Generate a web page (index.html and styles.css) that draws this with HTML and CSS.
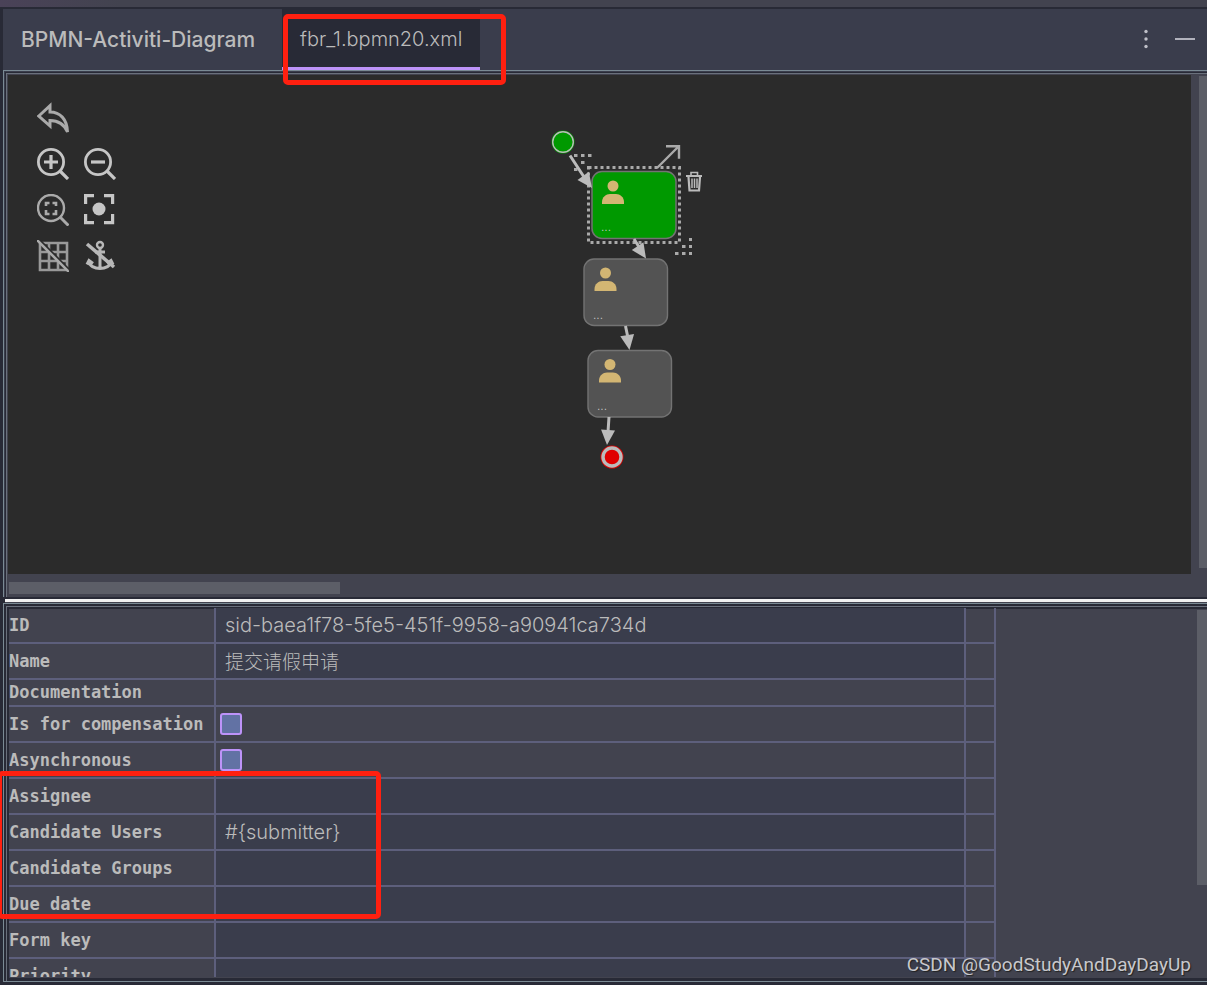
FILE: index.html
```html
<!DOCTYPE html>
<html lang="en">
<head>
<meta charset="utf-8">
<title>BPMN-Activiti-Diagram</title>
<link rel="stylesheet" href="styles.css">
</head>
<body>
<div class="strip"></div>
<main class="window">
  <header class="header">
    <h1 class="title">BPMN-Activiti-Diagram</h1>
    <button class="tab" type="button">fbr_1.bpmn20.xml</button>
    <div class="actions">
      <button class="action" type="button" aria-label="Options"><svg width="20" height="22" viewBox="0 0 20 22" fill="#bfc0c8"><circle cx="10" cy="3.5" r="1.7"/><circle cx="10" cy="11" r="1.7"/><circle cx="10" cy="18.5" r="1.7"/></svg></button>
      <button class="action" type="button" aria-label="Hide"><svg width="20" height="22" viewBox="0 0 20 22"><path d="M0 11h20" stroke="#b1b2bc" stroke-width="2"/></svg></button>
    </div>
  </header>

  <section class="pane diagram">
    <div class="canvas">
      <svg class="graph" role="img" aria-label="Process diagram">
        <defs>
          <g id="user"><circle cx="22" cy="14" r="5.5"/><path d="M11 32v-2c0-5 4-8 8-8h6c4 0 8 3 8 8v2z"/></g>
          <path id="head" d="M0 0L-15 7V-7z"/>
        </defs>
        <g transform="translate(-8 -75)">
          <circle cx="563" cy="142" r="11.5" fill="#009900"/>
          <circle cx="563" cy="142" r="10.3" fill="none" stroke="#bbb" stroke-width="1.4"/>
          <path d="M574 155.500h3.500M581 155.500h3.500M588 155.500h3.500M581 162.500h3.500M574 169.500h3.500" stroke="#aaa" stroke-width="3"/>
          <rect x="592" y="171.500" width="84" height="67" rx="10" fill="#009900" stroke="#737373" stroke-width="1.500"/>
          <rect x="588.500" y="167.500" width="91" height="75" fill="none" stroke="#aaa" stroke-width="3" stroke-dasharray="3 3"/>
          <use href="#user" x="591" y="172" fill="#d3b673"/>
          <text class="dots" x="601" y="231">...</text>
          <rect x="584" y="259" width="83.500" height="66.500" rx="10" fill="#535353" stroke="#737373" stroke-width="1.400"/>
          <use href="#user" x="583.500" y="259" fill="#d3b673"/>
          <text class="dots" x="593" y="319">...</text>
          <rect x="588" y="350.500" width="83.500" height="66.500" rx="10" fill="#535353" stroke="#737373" stroke-width="1.400"/>
          <use href="#user" x="588" y="350.500" fill="#d3b673"/>
          <text class="dots" x="597" y="410">...</text>
          <g fill="#bbb" stroke="none">
            <path d="M570 155.500L584 177M634 239L639 247M625.500 326L628 338M609 417L608 432" stroke="#bbb" stroke-width="3"/>
            <use href="#head" transform="translate(592 188) rotate(54)"/>
            <use href="#head" transform="translate(646 258.500) rotate(56)"/>
            <use href="#head" transform="translate(629.500 350) rotate(81)"/>
            <use href="#head" transform="translate(607 445) rotate(94)"/>
          </g>
          <circle cx="612" cy="457" r="11.500" fill="#e00000"/>
          <circle cx="612" cy="457" r="9" fill="#e00000" stroke="#bbb" stroke-width="3.400"/>
          <path d="M657 168L678.500 146.500M666 146.200h13v12.500" fill="none" stroke="#aaa" stroke-width="2.400"/>
          <g fill="none" stroke="#bbb">
            <path d="M686 176h16" stroke-width="2"/>
            <path d="M691 175v-2.500h6.500v2.500" stroke-width="1.600"/>
            <path d="M688.500 177l1 13.500h9.500l1-13.500" stroke-width="2.200"/>
            <path d="M692 178.500v9.500M694.500 178.500v9.500M697 178.500v9.500" stroke-width="1.500"/>
          </g>
          <path d="M689 239.500h3M682 246.500h3.500M689 246.500h3M675 253.500h3.500M682 253.500h3.500M689 253.500h3" stroke="#aaa" stroke-width="3"/>
        </g>
      </svg>
      <div class="tools">
        <button class="tool undo" type="button" aria-label="Undo"><svg viewBox="0 0 32 32"><path d="M1.800 14L13 3.700V10C23 10 30 17 30.500 30C27 22 22 18.500 13 18.500v5.500z" fill="none" stroke="#aaa" stroke-width="3"/></svg></button>
        <button class="tool" type="button" aria-label="Zoom in"><svg viewBox="0 0 32 32" fill="none" stroke="#c6c6c6"><circle cx="14" cy="14" r="12.600" stroke-width="2.800"/><path d="M23 23l8 8" stroke-width="3.200"/><path d="M7 14h14M14 7v14" stroke-width="3.200"/></svg></button>
        <button class="tool" type="button" aria-label="Zoom out"><svg viewBox="0 0 32 32" fill="none" stroke="#c6c6c6"><circle cx="14" cy="14" r="12.600" stroke-width="2.800"/><path d="M23 23l8 8" stroke-width="3.200"/><path d="M7 14h14" stroke-width="3.200"/></svg></button>
        <button class="tool" type="button" aria-label="Fit to window"><svg viewBox="0 0 32 32" fill="none" stroke="#aaa"><circle cx="14" cy="14" r="13" stroke-width="2.400"/><path d="M23.500 23.500l8 8" stroke-width="3"/><path d="M9 12V9h3.500M15.500 9H19v3M19 16v4h-3.500M12.500 20H9v-4" stroke-width="2.600"/></svg></button>
        <button class="tool" type="button" aria-label="Center"><svg viewBox="0 0 32 32" fill="none" stroke="#c6c6c6" stroke-width="3.200"><path d="M1.600 10V1.600H10M20 1.600h8.600V10M28.600 20v8.600H20M10 28.600H1.600V20"/><circle cx="15" cy="15" r="6.500" fill="#c6c6c6" stroke="none"/></svg></button>
        <button class="tool" type="button" aria-label="Snap to grid"><svg viewBox="0 0 32 32" fill="none" stroke="#999" stroke-width="2.600"><path d="M3 3v27h27V3zM12 3v27M21 3v27M3 12h27M3 21h27"/><path d="M2 0l32 32" stroke="#2b2b2b" stroke-width="3"/><path d="M0 0l32 32" stroke="#aaa"/></svg></button>
        <button class="tool" type="button" aria-label="Anchors"><svg viewBox="0 0 32 32" fill="none" stroke="#b8b8b8" stroke-width="3"><circle cx="16" cy="5" r="3" stroke-width="2.400"/><path d="M16 8v20M11 12h10M4.500 21C6 31 26 31 27.500 21M3 24.500l2-4 4 3M29 24.500l-2-4-4 3"/><path d="M3 4l27 23" stroke-width="3.600"/></svg></button>
      </div>
    </div>
    <div class="vtrack"><div class="thumb"></div></div>
    <div class="htrack"><div class="thumb"></div></div>
  </section>

  <div class="splitter"></div>

  <section class="pane properties">
    <div class="sheet">
      <table class="grid">
        <colgroup><col class="col-name"><col class="col-value"><col class="col-more"></colgroup>
        <tr><th scope="row"><label for="p1">ID</label></th><td class="edit"><input id="p1" class="field" type="text" value="sid-baea1f78-5fe5-451f-9958-a90941ca734d"></td><td></td></tr>
        <tr><th scope="row"><label for="p2">Name</label></th><td class="edit"><input id="p2" class="field cjk" type="text" value="提交请假申请"></td><td></td></tr>
        <tr class="short"><th scope="row">Documentation</th><td></td><td></td></tr>
        <tr><th scope="row"><label for="p4">Is for compensation</label></th><td><input id="p4" class="check" type="checkbox"></td><td></td></tr>
        <tr><th scope="row"><label for="p5">Asynchronous</label></th><td><input id="p5" class="check" type="checkbox"></td><td></td></tr>
        <tr><th scope="row"><label for="p6">Assignee</label></th><td class="edit"><input id="p6" class="field" type="text"></td><td></td></tr>
        <tr><th scope="row"><label for="p7">Candidate Users</label></th><td class="edit"><input id="p7" class="field" type="text" value="#{submitter}"></td><td></td></tr>
        <tr><th scope="row"><label for="p8">Candidate Groups</label></th><td class="edit"><input id="p8" class="field" type="text"></td><td></td></tr>
        <tr><th scope="row"><label for="p9">Due date</label></th><td class="edit"><input id="p9" class="field" type="text"></td><td></td></tr>
        <tr><th scope="row"><label for="p10">Form key</label></th><td class="edit"><input id="p10" class="field" type="text"></td><td></td></tr>
        <tr><th scope="row"><label for="p11">Priority</label></th><td class="edit"><input id="p11" class="field" type="text"></td><td></td></tr>
      </table>
    </div>
    <div class="vtrack"><div class="thumb"></div></div>
  </section>
</main>
<div class="mark mark-tab"></div>
<div class="mark mark-rows"></div>
<div class="watermark">CSDN @GoodStudyAndDayDayUp</div>
</body>
</html>
```
FILE: styles.css
```css
* { box-sizing: border-box; }

body {
  margin: 0;
  height: 100vh;
  display: flex;
  flex-direction: column;
  position: relative;
  overflow: hidden;
  background: #282a36;
  color: #bbbbbb;
  font-family: Inter, "Noto Sans CJK SC", sans-serif;
  font-size: 20px;
}

button, input { font: inherit; color: inherit; }

.strip {
  flex: none;
  height: 7px;
  margin-bottom: 2px;
  background: linear-gradient(90deg, #4a4258, #42434f 10%);
}

.window {
  flex: 1;
  min-height: 0;
  margin-left: 3px;
  display: flex;
  flex-direction: column;
}

.header {
  flex: none;
  height: 61px;
  display: flex;
  background: #3a3d4c;
}

.title {
  margin: 0;
  padding: 0 27px 0 18px;
  font-size: 21px;
  font-weight: 500;
  line-height: 61px;
}

.tab {
  border: 0;
  border-bottom: 3px solid #bd93f9;
  padding: 2px 18px 0;
  background: #282a36;
  font-weight: 300;
  line-height: 56px;
}

.actions {
  margin-left: auto;
  padding: 19px 12px 0 0;
  display: flex;
  gap: 19px;
  align-items: flex-start;
}

.action {
  display: flex;
  border: 0;
  padding: 0;
  background: none;
}

.pane {
  display: grid;
  border: 1px solid #7a8a94;
  border-right: 0;
  background: #42434f;
}

.diagram {
  flex: 529 1 0;
  min-height: 0;
  grid-template: minmax(0, 1fr) 21px / minmax(0, 1fr) 16px;
  border-width: 1px 0 0 1px;
  box-shadow: inset 1px 1px #3a3d4c, inset 2px 2px #282a36, inset 3px 3px #6a707c;
  padding: 4px 0 2px 4px;
}

.canvas {
  position: relative;
  overflow: hidden;
  background: #2b2b2b;
}

.graph {
  display: block;
  width: 100%;
  height: 100%;
}

.dots {
  font-family: "Open Sans", sans-serif;
  font-size: 14px;
  font-weight: 300;
  fill: #cccccc;
}

.tools {
  position: absolute;
  left: 29px;
  top: 27px;
  display: grid;
  grid-template-columns: 32px 32px;
  gap: 14px 15px;
}

.tool {
  width: 32px;
  height: 32px;
  border: 0;
  padding: 0;
  background: none;
}

.tool svg {
  display: block;
  width: 32px;
  height: 32px;
}

.undo { grid-column: 1 / -1; }

.thumb { background: #5c5e67; }

.diagram .vtrack { padding: 1px 0 6px 8px; }
.diagram .htrack { padding: 8px 0 1px 1px; }
.vtrack .thumb { height: 100%; }
.htrack .thumb { width: 28%; height: 12px; }

.splitter {
  flex: none;
  height: 6px;
  margin-left: 2px;
  border: solid #42434f;
  border-width: 2px 0 1px;
  border-top-color: #282a36;
  background: #f2f2f2;
  background-clip: padding-box;
}

.properties {
  flex: 376 1 0;
  min-height: 0;
  margin-bottom: 3px;
  grid-template-columns: minmax(0, 1fr) 10px;
  border-width: 1px 0 1px 1px;
  padding: 4px 0 4px 5px;
  background: #42434f;
  box-shadow: inset 2px 2px #282a36, inset 3px 3px #6a707c, inset 5px 5px #282a36, inset 0 -3px #282a36;
}

.sheet {
  overflow: hidden;
  min-height: 0;
}

.grid {
  width: 83.1%;
  table-layout: fixed;
  border-spacing: 0;
}

.col-name { width: 207px; }
.col-more { width: 30px; }

.grid th, .grid td {
  height: 36px;
  padding: 0;
  border: solid #5d5f7c;
  border-width: 0 2px 2px 0;
  text-align: left;
  vertical-align: middle;
}

.grid th {
  font-family: "DejaVu Sans Mono", monospace;
  font-size: 17px;
  line-height: 24px;
  white-space: nowrap;
}

.grid .short th, .grid .short td { height: 27px; }

.grid .edit { background: #3a3d4c; }

.field {
  display: block;
  width: 100%;
  height: 34px;
  border: 0;
  padding: 0 9px;
  background: none;
  outline: 0;
  font-weight: 300;
}

.cjk { font-size: 19px; }

.check {
  appearance: none;
  display: block;
  width: 22px;
  height: 22px;
  margin: 0 4px;
  border: 2px solid #bd93f9;
  border-radius: 3px;
  background: #6272a4;
}

.properties .vtrack {
  min-height: 0;
  padding-top: 2px;
}
.properties .thumb { height: 75%; }

.mark {
  position: absolute;
  border: 5px solid #ff2010;
  border-radius: 5px;
}

.mark-tab { left: 283px; top: 14px; width: 223px; height: 71px; }
.mark-rows { left: -3px; top: 771px; width: 384px; height: 148px; }

.watermark {
  position: absolute;
  right: 16px;
  bottom: 8px;
  font-family: Roboto, sans-serif;
  font-size: 19px;
  line-height: 24px;
  color: #c8c8cc;
  text-shadow: 1px 1px 1px #222222;
}
```
